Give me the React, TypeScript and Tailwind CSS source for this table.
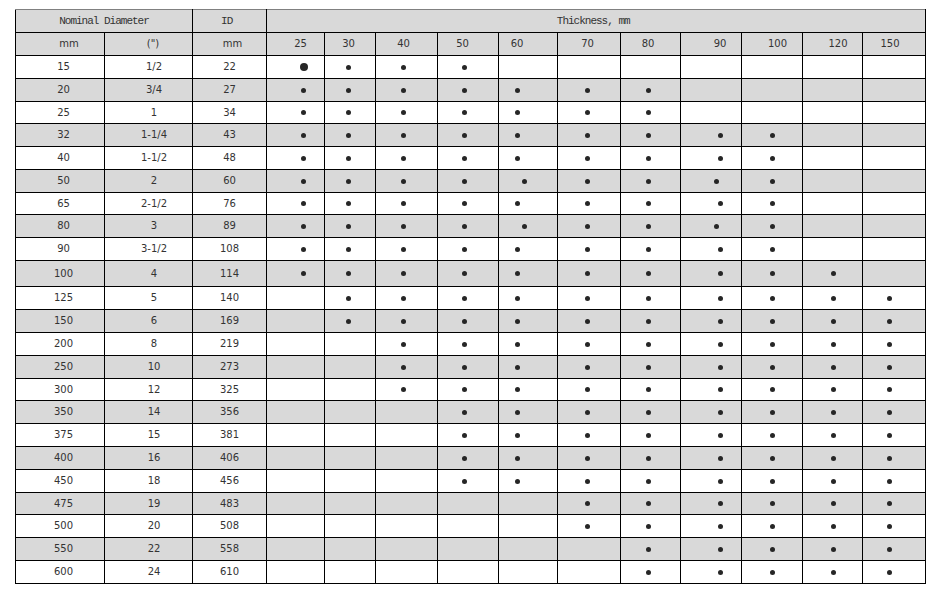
import React from 'react';

const thickness = ['25', '30', '40', '50', '60', '70', '80', '90', '100', '120', '150'];

const colWidths = ['w-[89px]', 'w-[88px]', 'w-[74px]', 'w-[58px]', 'w-[51px]', 'w-[62px]', 'w-[61px]', 'w-[59px]', 'w-[63px]', 'w-[60px]', 'w-[61px]', 'w-[61px]', 'w-[60px]', 'w-[63px]'];

// nudges so labels and dots sit where the source sheet has them
const headOffset = ['pl-[10px]', 'pr-[3px]', 'pr-[6px]', 'pr-[11px]', 'pr-[22px]', 'pr-[3px]', 'pr-[5px]', 'pl-[18px]', 'pl-[11px]', 'pl-[11px]', 'pr-[8px]'];
const dotOffset = ['pl-[16px]', 'pr-[3px]', 'pr-[6px]', 'pr-[8px]', 'pr-[22px]', 'pr-[4px]', 'pr-[5px]', 'pl-[19px]', '', 'pl-[2px]', 'pr-[9px]'];
const dotOffsetAlt = ['pl-[16px]', 'pr-[3px]', 'pr-[6px]', 'pr-[8px]', 'pr-[7px]', 'pr-[4px]', 'pr-[5px]', 'pl-[11px]', '', 'pl-[2px]', 'pr-[9px]'];

type Row = { mm: string; inch: string; id: string; from: number; to: number; h: string; alt?: boolean };

const rows: Row[] = [
  { mm: '15', inch: '1/2', id: '22', from: 0, to: 3, h: 'h-[23px]' },
  { mm: '20', inch: '3/4', id: '27', from: 0, to: 6, h: 'h-[23px]' },
  { mm: '25', inch: '1', id: '34', from: 0, to: 6, h: 'h-[22px]' },
  { mm: '32', inch: '1-1/4', id: '43', from: 0, to: 8, h: 'h-[23px]' },
  { mm: '40', inch: '1-1/2', id: '48', from: 0, to: 8, h: 'h-[23px]' },
  { mm: '50', inch: '2', id: '60', from: 0, to: 8, h: 'h-[23px]', alt: true },
  { mm: '65', inch: '2-1/2', id: '76', from: 0, to: 8, h: 'h-[22px]' },
  { mm: '80', inch: '3', id: '89', from: 0, to: 8, h: 'h-[23px]', alt: true },
  { mm: '90', inch: '3-1/2', id: '108', from: 0, to: 8, h: 'h-[23px]' },
  { mm: '100', inch: '4', id: '114', from: 0, to: 9, h: 'h-[26px]' },
  { mm: '125', inch: '5', id: '140', from: 1, to: 10, h: 'h-[23px]' },
  { mm: '150', inch: '6', id: '169', from: 1, to: 10, h: 'h-[23px]' },
  { mm: '200', inch: '8', id: '219', from: 2, to: 10, h: 'h-[23px]' },
  { mm: '250', inch: '10', id: '273', from: 2, to: 10, h: 'h-[23px]' },
  { mm: '300', inch: '12', id: '325', from: 2, to: 10, h: 'h-[22px]' },
  { mm: '350', inch: '14', id: '356', from: 3, to: 10, h: 'h-[23px]' },
  { mm: '375', inch: '15', id: '381', from: 3, to: 10, h: 'h-[23px]' },
  { mm: '400', inch: '16', id: '406', from: 3, to: 10, h: 'h-[23px]' },
  { mm: '450', inch: '18', id: '456', from: 3, to: 10, h: 'h-[23px]' },
  { mm: '475', inch: '19', id: '483', from: 5, to: 10, h: 'h-[22px]' },
  { mm: '500', inch: '20', id: '508', from: 5, to: 10, h: 'h-[23px]' },
  { mm: '550', inch: '22', id: '558', from: 6, to: 10, h: 'h-[23px]' },
  { mm: '600', inch: '24', id: '610', from: 6, to: 10, h: 'h-[23px]' },
];

const cell = 'border border-black p-0 text-center align-middle leading-none';
const mono = "font-['Liberation_Mono',monospace] text-[11px] tracking-[-1px]";

const App = () => {
  return (
    <div className="min-h-[598px] w-[940px] bg-white pl-[15px] pt-[9px] text-[10px] text-[#333] font-['DejaVu_Sans',sans-serif]">
      <table className="w-[910px] table-fixed border-collapse">
        <colgroup>
          {colWidths.map((w, i) => (
            <col key={i} className={w} />
          ))}
        </colgroup>
        <thead>
          <tr className="h-[23px] bg-[#d9d9d9]">
            <th colSpan={2} className={`${cell} ${mono} border-t-[#808080] font-normal`}>Nominal Diameter</th>
            <th className={`${cell} ${mono} border-t-[#808080] font-normal`}>ID&nbsp;</th>
            <th colSpan={11} className={`${cell} ${mono} border-t-[#808080] font-normal`}>Thickness, mm&nbsp;</th>
          </tr>
          <tr className="h-[23px] bg-[#d9d9d9]">
            <th className={`${cell} pl-[18px] font-normal`}>mm</th>
            <th className={`${cell} pl-[9px] font-normal`}>(")</th>
            <th className={`${cell} pl-[6px] font-normal`}>mm</th>
            {thickness.map((t, i) => (
              <th key={t} className={`${cell} ${headOffset[i]} font-normal`}>{t}</th>
            ))}
          </tr>
        </thead>
        <tbody>
          {rows.map((r, ri) => (
            <tr key={r.mm} className={`${r.h} ${ri % 2 === 1 ? 'bg-[#d9d9d9]' : 'bg-white'}`}>
              <td className={`${cell} pl-[7px]`}>{r.mm}</td>
              <td className={`${cell} pl-[11px]`}>{r.inch}</td>
              <td className={`${cell}`}>{r.id}</td>
              {thickness.map((t, i) => {
                const on = i >= r.from && i <= r.to;
                const big = ri === 0 && i === 0;
                const off = r.alt ? dotOffsetAlt[i] : dotOffset[i];
                return (
                  <td key={t} className={`${cell} ${off}`}>
                    {on && (
                      <span
                        className={`inline-block rounded-full bg-[#262626] align-middle ${big ? 'h-[8px] w-[8px]' : 'h-[5px] w-[5px]'}`}
                      />
                    )}
                  </td>
                );
              })}
            </tr>
          ))}
        </tbody>
      </table>
    </div>
  );
};

export default App;
